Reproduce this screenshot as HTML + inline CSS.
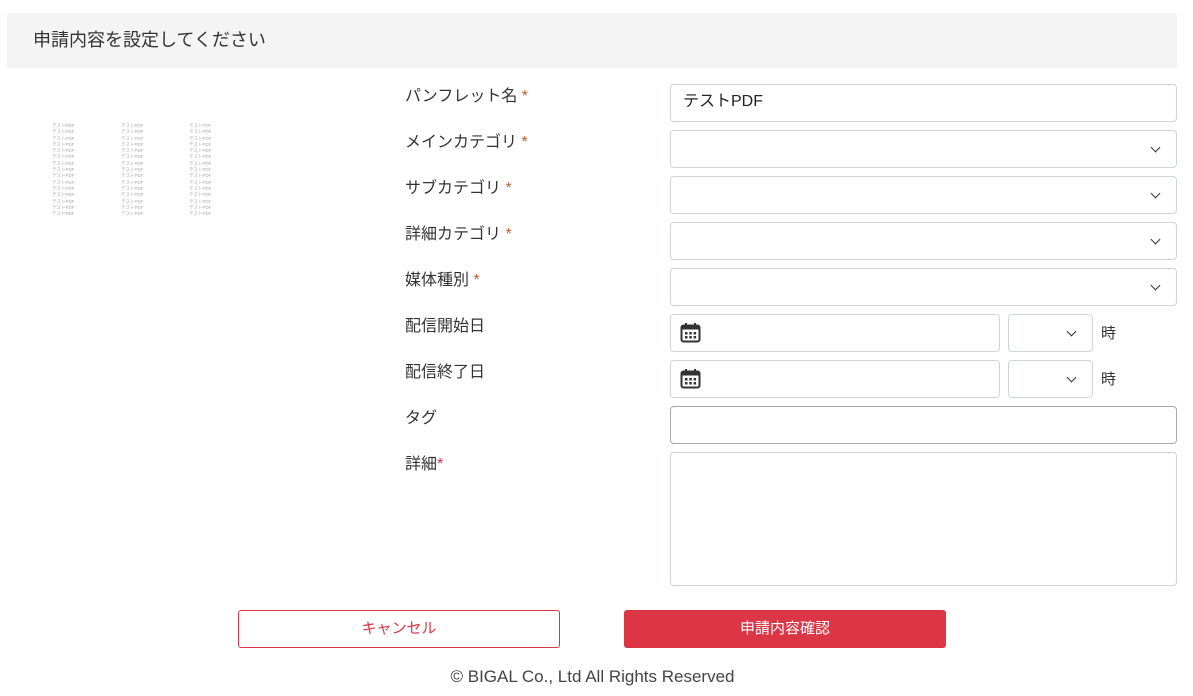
<!DOCTYPE html>
<html><head><meta charset="utf-8"><style>
*{box-sizing:border-box;margin:0;padding:0}
body{width:1193px;height:696px;background:#fff;font-family:"Liberation Sans","Noto Sans CJK JP",sans-serif;color:#333;position:relative;overflow:hidden}
.hd{position:absolute;left:7px;top:13px;width:1170px;height:55px;background:#f4f4f4;font-size:18px;line-height:54px;padding-left:26px;color:#333}
.lb{position:absolute;left:405px;font-size:16px;color:#333}
.lb span{color:#c0622a}
.in{position:absolute;left:670px;width:507px;height:38px;border:1px solid #ced4da;border-radius:4px;background:#fff}
.chev{position:absolute;right:17px;top:13px;width:7px;height:7px;border-right:1.6px solid #333;border-bottom:1.6px solid #333;transform:rotate(45deg)}
.thumb{position:absolute;font-size:4.5px;line-height:6.3px;color:#aaa;top:123px}
.btn{position:absolute;top:610px;width:322px;height:38px;border-radius:3px;font-size:15px;text-align:center;line-height:36px}
</style></head><body>
<div class="hd">申請内容を設定してください</div>
<div class="thumb" style="left:52px">テストPDF<br>テストPDF<br>テストPDF<br>テストPDF<br>テストPDF<br>テストPDF<br>テストPDF<br>テストPDF<br>テストPDF<br>テストPDF<br>テストPDF<br>テストPDF<br>テストPDF<br>テストPDF<br>テストPDF</div>
<div class="thumb" style="left:121px">テストPDF<br>テストPDF<br>テストPDF<br>テストPDF<br>テストPDF<br>テストPDF<br>テストPDF<br>テストPDF<br>テストPDF<br>テストPDF<br>テストPDF<br>テストPDF<br>テストPDF<br>テストPDF<br>テストPDF</div>
<div class="thumb" style="left:189px">テストPDF<br>テストPDF<br>テストPDF<br>テストPDF<br>テストPDF<br>テストPDF<br>テストPDF<br>テストPDF<br>テストPDF<br>テストPDF<br>テストPDF<br>テストPDF<br>テストPDF<br>テストPDF<br>テストPDF</div>

<div class="lb" style="top:82px">パンフレット名 <span>*</span></div>
<div class="lb" style="top:128px">メインカテゴリ <span>*</span></div>
<div class="lb" style="top:174px">サブカテゴリ <span>*</span></div>
<div class="lb" style="top:220px">詳細カテゴリ <span>*</span></div>
<div class="lb" style="top:266px">媒体種別 <span>*</span></div>
<div class="lb" style="top:312px">配信開始日</div>
<div class="lb" style="top:358px">配信終了日</div>
<div class="lb" style="top:404px">タグ</div>
<div class="lb" style="top:450px">詳細<span style="color:#d0304a">*</span></div>

<div class="in" style="top:84px;font-size:16px;line-height:34px;padding-left:12px;color:#222">テストPDF</div>
<div class="in" style="top:130px"><div class="chev"></div></div>
<div class="in" style="top:176px"><div class="chev"></div></div>
<div class="in" style="top:222px"><div class="chev"></div></div>
<div class="in" style="top:268px"><div class="chev"></div></div>

<div class="in" style="top:314px;width:330px"><svg style="position:absolute;left:9px;top:7px" width="21" height="21" viewBox="0 0 21 21"><rect x="1.5" y="3.5" width="18" height="16" rx="2" fill="none" stroke="#333" stroke-width="2"/><rect x="1.5" y="3.5" width="18" height="4" fill="#333"/><rect x="5" y="1" width="2" height="4" fill="#333"/><rect x="14" y="1" width="2" height="4" fill="#333"/><g fill="#333"><rect x="5" y="10" width="2.5" height="2.5"/><rect x="9.3" y="10" width="2.5" height="2.5"/><rect x="13.6" y="10" width="2.5" height="2.5"/><rect x="5" y="14" width="2.5" height="2.5"/><rect x="9.3" y="14" width="2.5" height="2.5"/><rect x="13.6" y="14" width="2.5" height="2.5"/></g></svg></div>
<div class="in" style="top:314px;left:1008px;width:85px"><div class="chev"></div></div>
<div class="lb" style="top:322px;left:1101px;font-size:15px">時</div>

<div class="in" style="top:360px;width:330px"><svg style="position:absolute;left:9px;top:7px" width="21" height="21" viewBox="0 0 21 21"><rect x="1.5" y="3.5" width="18" height="16" rx="2" fill="none" stroke="#333" stroke-width="2"/><rect x="1.5" y="3.5" width="18" height="4" fill="#333"/><rect x="5" y="1" width="2" height="4" fill="#333"/><rect x="14" y="1" width="2" height="4" fill="#333"/><g fill="#333"><rect x="5" y="10" width="2.5" height="2.5"/><rect x="9.3" y="10" width="2.5" height="2.5"/><rect x="13.6" y="10" width="2.5" height="2.5"/><rect x="5" y="14" width="2.5" height="2.5"/><rect x="9.3" y="14" width="2.5" height="2.5"/><rect x="13.6" y="14" width="2.5" height="2.5"/></g></svg></div>
<div class="in" style="top:360px;left:1008px;width:85px"><div class="chev"></div></div>
<div class="lb" style="top:368px;left:1101px;font-size:15px">時</div>

<div class="in" style="top:406px;border-color:#a9a9a9"></div>
<div class="in" style="top:452px;height:134px"></div>

<div class="btn" style="left:238px;border:1px solid #dc3545;color:#dc3545;background:#fff">キャンセル</div>
<div class="btn" style="left:624px;background:#dc3545;color:#fff;border:1px solid #dc3545">申請内容確認</div>
<div style="position:absolute;left:0;width:1185px;top:667px;text-align:center;font-size:17px;color:#444">© BIGAL Co., Ltd All Rights Reserved</div>
</body></html>
